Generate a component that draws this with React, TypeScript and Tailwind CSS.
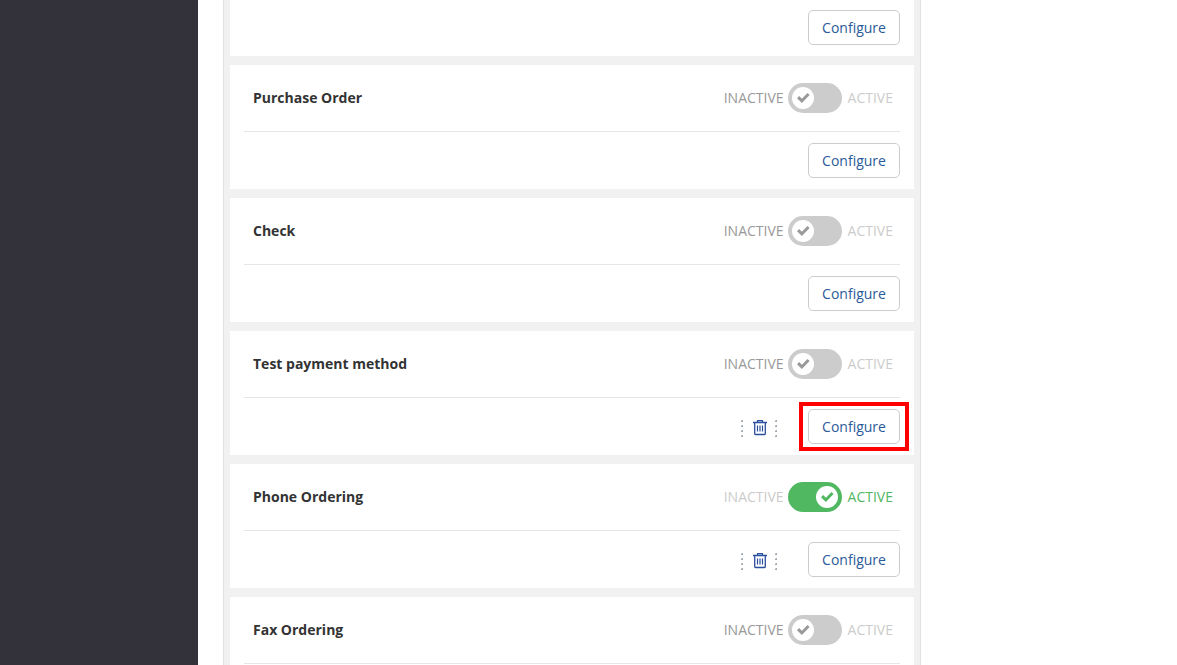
import { useState } from "react";

type Method = {
  id: string;
  name: string;
  active?: boolean;
  removable?: boolean;
  highlighted?: boolean;
  collapsed?: boolean;
};

const methods: Method[] = [
  { id: "purchase-order", name: "Purchase Order" },
  { id: "check", name: "Check" },
  { id: "test", name: "Test payment method", removable: true, highlighted: true },
  { id: "phone", name: "Phone Ordering", active: true, removable: true },
  { id: "fax", name: "Fax Ordering", collapsed: true },
];

function Toggle({ id, name, initial }: { id: string; name: string; initial: boolean }) {
  const [on, setOn] = useState(initial);
  return (
    <label htmlFor={id} className="flex cursor-pointer items-center">
      <span className={on ? "text-[#cccccc]" : "text-[#999999]"}>INACTIVE</span>
      <input
        id={id}
        type="checkbox"
        aria-label={name}
        checked={on}
        onChange={(e) => setOn(e.target.checked)}
        className="sr-only"
      />
      <span
        className={`mr-1.5 ml-1 flex h-[30px] w-[54px] items-center rounded-full px-1 ${
          on ? "justify-end bg-[#51b862]" : "justify-start bg-[#cccccc]"
        }`}
      >
        <span
          className={`flex size-[22px] items-center justify-center rounded-full bg-white ${
            on ? "text-[#51b862]" : "text-[#999999]"
          }`}
        >
          <svg width="14" height="10" viewBox="0 0 14 10" fill="currentColor" aria-hidden="true">
            <path d="M1 5.2 3.1 3.1 5.9 5.7 11.5 0 13.6 2.1 5.9 9.9z" />
          </svg>
        </span>
      </span>
      <span className={on ? "text-[#51b862]" : "text-[#cccccc]"}>ACTIVE</span>
    </label>
  );
}

function Dots() {
  return (
    <svg width="2" height="17" viewBox="0 0 2 17" fill="#a3a9b0" aria-hidden="true">
      <path d="M0 1 1 0h1v2H0zM0 6 1 5h1v2H0zM0 11l1-1h1v2H0zM0 16l1-1h1v2H0z" />
    </svg>
  );
}

function Actions({ removable, highlighted }: { removable?: boolean; highlighted?: boolean }) {
  return (
    <div className="flex items-center justify-end">
      {removable && (
        <div className="mr-[31px] flex items-start gap-2 pt-1">
          <Dots />
          <button type="button" aria-label="Delete" className="cursor-pointer text-[#2b4f9e]">
            <svg width="16" height="16" viewBox="-2 0 16 16" fill="none" stroke="currentColor" aria-hidden="true">
              <path d="M0 2.5h14M4.5 2.5V1q0-.5.5-.5h4q.5 0 .5.5v1.5M1.7 3v10.7q0 .8.8.8h9q.8 0 .8-.8V3" strokeWidth="1.3" />
              <path d="M4.5 5.5v6M7 5.5v6M9.5 5.5v6" strokeWidth="1.2" />
            </svg>
          </button>
          <Dots />
        </div>
      )}
      <div className="relative">
        <button
          type="button"
          className="flex h-[35px] w-[92px] cursor-pointer items-center justify-center rounded-[5px] border border-[#cccccc] bg-white text-[#2a5b98]"
        >
          Configure
        </button>
        {highlighted && (
          <span className="pointer-events-none absolute -inset-x-[9px] -inset-y-[7px] border-4 border-[#ff0000]" />
        )}
      </div>
    </div>
  );
}

export default function App() {
  return (
    <div className="flex h-screen overflow-hidden bg-white font-['Open_Sans',sans-serif] text-sm text-[#333333]">
      <aside className="w-[198px] shrink-0 bg-[#33323b]" />
      <main className="min-w-0 flex-1 pl-[25px]">
        <div className="flex max-w-[698px] flex-col gap-[9px] border-x border-[#dfe1e5] bg-[#f1f1f1] px-1.5">
          <section className="bg-white px-3.5 pt-2.5 pb-[11px]">
            <Actions />
          </section>
          {methods.map((m) => (
            <section key={m.id} className="bg-white px-3.5 last:pb-3">
              <header className="flex h-[67px] items-center justify-between border-b border-[#e6e6e6] pr-[7px] pl-[9px]">
                <h2 className="font-bold">{m.name}</h2>
                <Toggle id={m.id} name={m.name} initial={!!m.active} />
              </header>
              {!m.collapsed && (
                <div className="py-[11px]">
                  <Actions removable={m.removable} highlighted={m.highlighted} />
                </div>
              )}
            </section>
          ))}
        </div>
      </main>
    </div>
  );
}
